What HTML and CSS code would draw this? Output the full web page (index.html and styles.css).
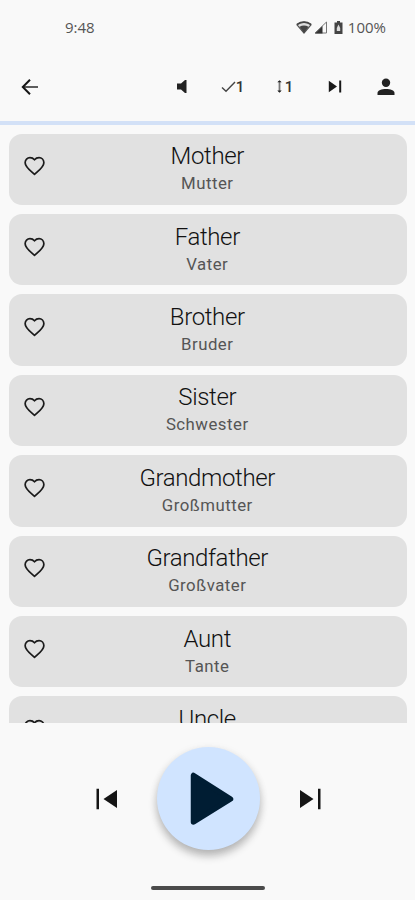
FILE: index.html
```html
<!DOCTYPE html>
<html lang="en">
<head>
<meta charset="utf-8">
<title>Family vocabulary</title>
<link rel="stylesheet" href="styles.css">
</head>
<body>
<svg class="defs" width="0" height="0" aria-hidden="true">
  <symbol id="heart" viewBox="0 0 24 22"><path d="M12 20.2 C8 16.6 1.7 12.2 1.7 7.4 C1.7 4 4.1 1.8 7 1.8 C9.1 1.8 11 3 12 4.2 C13 3 14.9 1.8 17 1.8 C19.9 1.8 22.3 4 22.3 7.4 C22.3 12.2 16 16.6 12 20.2 Z" fill="none" stroke="#1b1b1b" stroke-width="1.9" stroke-linejoin="round"/></symbol>
</svg>
<div class="screen">
  <div class="status">
    <span class="time">9:48</span>
    <div class="indicators">
      <svg class="wifi" width="16" height="13" viewBox="0 0 16 13"><path d="M1 3.8 Q8 -1.4 15 3.8 L8 12 Z" fill="#ddd" stroke="#555" stroke-width="1.2"/><path d="M3.5 5.8 Q8 3.2 12.5 5.8 L8 12 Z" fill="#444"/><path d="M1 3.4 Q8 -1.2 15 3.4" fill="none" stroke="#444" stroke-width="1.6"/></svg>
      <svg class="signal" width="14" height="13" viewBox="0 0 14 13"><path d="M1 12 H12.5 V1 Z" fill="none" stroke="#777" stroke-width="1"/><path d="M1 12.5 H8.5 V5 Z" fill="#333"/></svg>
      <svg class="battery" width="9" height="13" viewBox="0 0 9 13"><path d="M3 0 H6 V1.5 H8.5 V13 H.5 V1.5 H3Z" fill="#444"/><path d="M4.5 3.5 L2.8 7 V10 H6.2 V7Z" fill="#ddd"/></svg>
      <span>100%</span>
    </div>
  </div>
  <header class="toolbar">
    <svg class="back" width="18" height="18" viewBox="0 0 18 18"><path d="M17 9 H2" stroke="#555" stroke-width="1.9" fill="none"/><path d="M9 1.7 L1.8 9 L9 16.3" fill="none" stroke="#151515" stroke-width="2"/></svg>
    <div class="actions">
      <span class="action"><svg width="10" height="15" viewBox="0 0 10 15"><path d="M0 4.5 H4 L8 1 H9.5 V14 H8 L4 10.5 H0Z" fill="#222"/></svg></span>
      <span class="action"><svg width="15" height="12" viewBox="0 0 15 12"><path d="M1 6.5 L5 10.2 L14 1" fill="none" stroke="#444" stroke-width="1.4"/></svg><b>1</b></span>
      <span class="action repeat"><svg width="5" height="13" viewBox="0 0 5 13"><path d="M2.5 1 V12" stroke="#777" stroke-width="1.8"/><path d="M.3 2.2 L2.5 .2 L4.7 2.2Z M.3 10.6 L2.5 12.8 L4.7 10.6Z" fill="#222"/></svg><b>1</b></span>
      <span class="action"><svg width="14" height="13" viewBox="0 0 14 13"><path d="M.8 .8 L9 6.5 L.8 12.2Z M11.2 .5 H13.2 V12.5 H11.2Z" fill="#191919"/></svg></span>
      <span class="action"><svg width="18" height="18" viewBox="0 0 18 18"><circle cx="9" cy="4.7" r="4.2" fill="#222"/><path d="M.5 17 V15 C.5 9.8 17.5 9.8 17.5 15 V17Z" fill="#222"/></svg></span>
    </div>
  </header>
  <div class="progress"></div>
  <main class="words">
    <article class="card"><svg class="heart"><use href="#heart"/></svg><h2>Mother</h2><p>Mutter</p></article>
    <article class="card"><svg class="heart"><use href="#heart"/></svg><h2>Father</h2><p>Vater</p></article>
    <article class="card"><svg class="heart"><use href="#heart"/></svg><h2>Brother</h2><p>Bruder</p></article>
    <article class="card"><svg class="heart"><use href="#heart"/></svg><h2>Sister</h2><p>Schwester</p></article>
    <article class="card"><svg class="heart"><use href="#heart"/></svg><h2>Grandmother</h2><p>Großmutter</p></article>
    <article class="card"><svg class="heart"><use href="#heart"/></svg><h2>Grandfather</h2><p>Großvater</p></article>
    <article class="card"><svg class="heart"><use href="#heart"/></svg><h2>Aunt</h2><p>Tante</p></article>
    <article class="card"><svg class="heart"><use href="#heart"/></svg><h2>Uncle</h2></article>
  </main>
  <footer class="player">
    <svg width="22" height="22" viewBox="0 0 22 22"><path d="M.5 .8 H3 V21.2 H.5Z M21 2 V20 L7.5 11Z" fill="#151515"/></svg>
    <div class="play"><svg width="44" height="54" viewBox="0 0 44 54"><path d="M3.5 3.5 V50 L40.5 27Z" fill="#001d33" stroke="#001d33" stroke-width="5.5" stroke-linejoin="round"/></svg></div>
    <svg width="22" height="22" viewBox="0 0 22 22"><path d="M19 .8 H21.5 V21.2 H19Z M1 2 V20 L14.5 11Z" fill="#151515"/></svg>
  </footer>
  <div class="home"></div>
</div>
</body>
</html>
```
FILE: styles.css
```css
* { box-sizing: border-box; }
body { margin: 0; background: #f9f9f9; font-family: Roboto, sans-serif; }
.defs { position: absolute; }
.screen { width: 415px; height: 900px; overflow: hidden; display: flex; flex-direction: column; background: #f9f9f9; }
.status { height: 56px; flex: none; display: flex; align-items: center; justify-content: space-between; padding: 0 29px 2px 65px; font: 15px/20px "Open Sans", sans-serif; color: #555; }
.indicators { display: flex; align-items: center; }
.signal { margin-left: 2px; }
.battery { margin: 0 5px 0 6px; }
.toolbar { height: 65px; flex: none; display: flex; align-items: center; justify-content: space-between; padding: 0 4px 4px 21px; }
.actions { display: flex; }
.action { width: 51px; height: 20px; display: flex; align-items: center; justify-content: center; }
.action b { font: 500 15px/20px Roboto, sans-serif; color: #333; }
.repeat { gap: 3px; padding-left: 3px; }
.progress { height: 4px; flex: none; background: #d3e1f7; }
.words { height: 597.5px; flex: none; overflow: hidden; padding: 8.6px 8.5px 0 9px; display: flex; flex-direction: column; gap: 8.9px; }
.card { height: 71.5px; flex: none; display: grid; grid-template-columns: 50px 1fr 50px; grid-template-rows: 35px 20px; padding-top: 4.7px; border-radius: 13px; background: #e1e1e1; text-align: center; }
.heart { width: 23px; height: 20px; grid-row: 1 / 3; margin: 18px 0 0 13.5px; }
.card h2, .card p { grid-column: 2; margin: 0 1px 0 0; white-space: nowrap; }
.card h2 { font-size: 24px; line-height: 36px; letter-spacing: -.36px; font-weight: 300; color: #111; }
.card p { font-size: 16.8px; line-height: 20px; letter-spacing: .5px; font-weight: 400; color: #555; }
.player { height: 152px; flex: none; display: flex; align-items: center; justify-content: center; gap: 39px; padding-left: 1px; }
.play { width: 103px; height: 103px; border-radius: 50%; background: #d0e4ff; display: flex; align-items: center; justify-content: center; padding-left: 8px; box-shadow: 0 6px 9px rgba(0, 0, 0, .24), 0 2px 10px rgba(0, 0, 0, .08); }
.home { width: 114px; height: 4px; flex: none; margin: 11px auto 0; border-radius: 2px; background: #4b4b4b; }
```
